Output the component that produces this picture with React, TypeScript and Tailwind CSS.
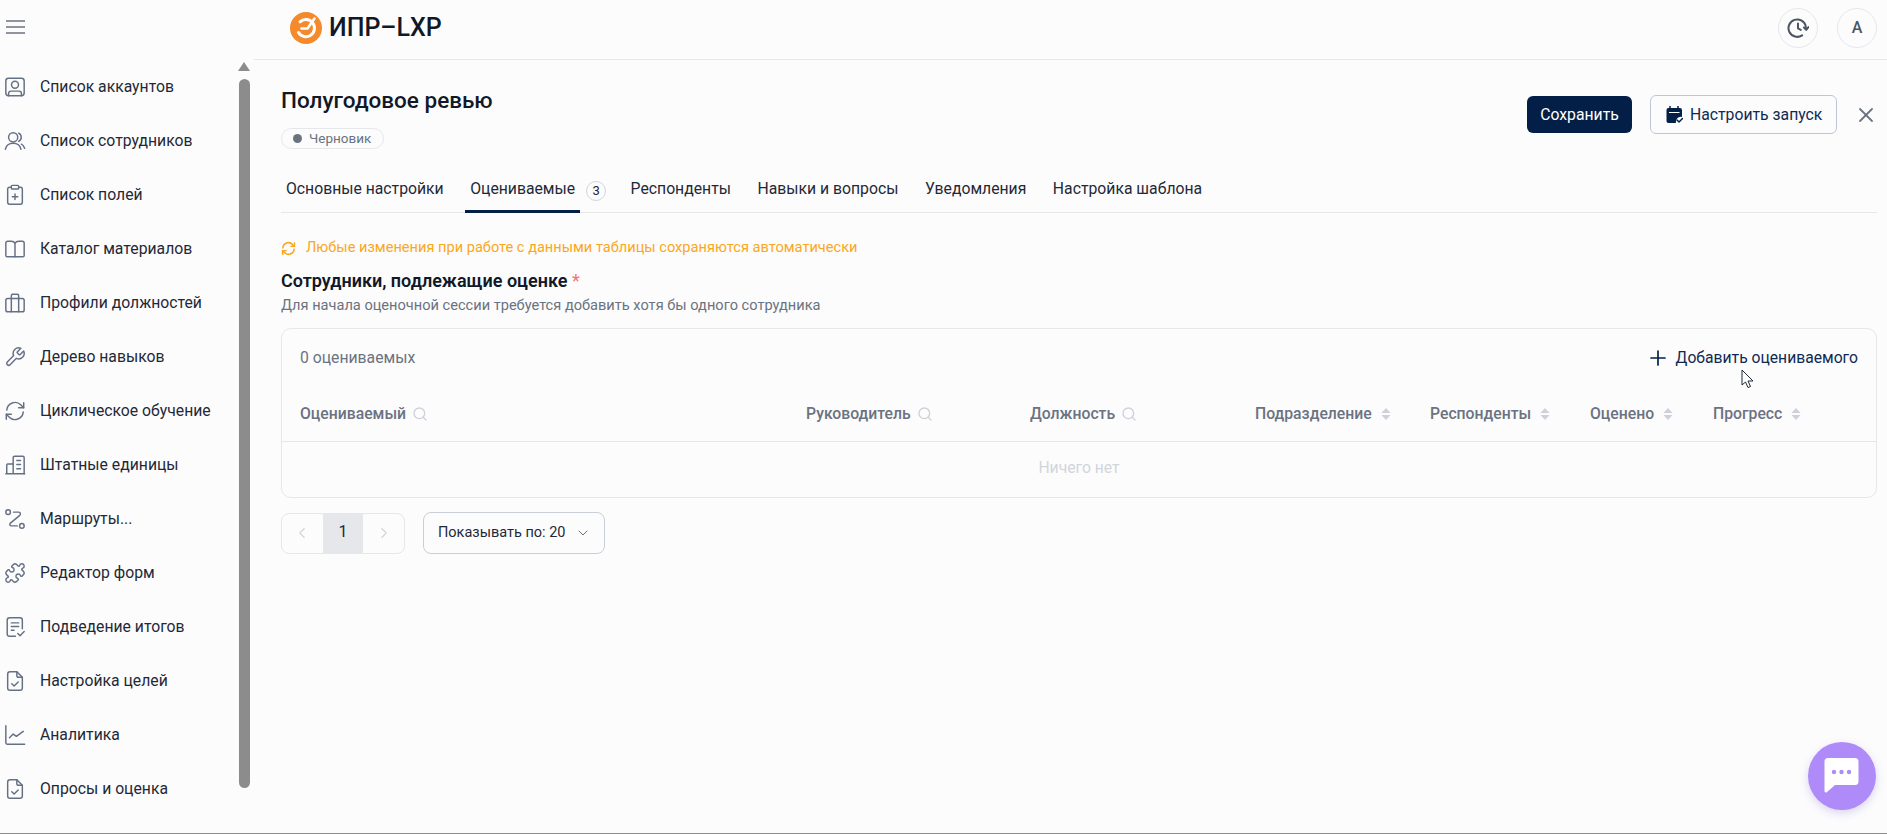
import type { ReactNode } from "react";
import { ChevronDown, ChevronLeft, ChevronRight, Plus, Search, X } from "lucide-react";

function Ico({ children }: { children: ReactNode }) {
  return (
    <svg
      width="22"
      height="22"
      viewBox="0 0 24 24"
      fill="none"
      stroke="#667085"
      strokeWidth="1.600"
      strokeLinecap="round"
      strokeLinejoin="round"
      className="shrink-0"
    >
      {children}
    </svg>
  );
}

const menu: { label: string; icon: ReactNode }[] = [
  {
    label: "Список аккаунтов",
    icon: (
      <>
        <rect x="2" y="2.500" width="20" height="19" rx="3" />
        <circle cx="12" cy="9.500" r="3.800" />
        <path d="M5 21.500v-2.500a2.500 2.500 0 0 1 2.500-2.500h9a2.500 2.500 0 0 1 2.500 2.500v2.500" />
      </>
    ),
  },
  {
    label: "Список сотрудников",
    icon: (
      <>
        <circle cx="10" cy="8" r="5" />
        <path d="M1.500 21c1-4.500 4.500-6.500 8.500-6.500s7.500 2 8.500 6.500" />
        <path d="M16 3.500a5 5 0 0 1 0 9" />
        <path d="M19 15.500c1.700.8 2.800 2.500 3.500 4.500" />
      </>
    ),
  },
  {
    label: "Список полей",
    icon: (
      <>
        <rect x="8" y="1.500" width="8" height="4" rx="1" />
        <path d="M8 3.500H6a2 2 0 0 0-2 2V20a2 2 0 0 0 2 2h12a2 2 0 0 0 2-2V5.500a2 2 0 0 0-2-2h-2" />
        <path d="M12 11v6M9 14h6" />
      </>
    ),
  },
  {
    label: "Каталог материалов",
    icon: (
      <>
        <path d="M12 5.500C11 4 9.500 3.500 8 3.500H4a2 2 0 0 0-2 2V19a1.500 1.500 0 0 0 1.500 1.500H20.500A1.500 1.500 0 0 0 22 19V5.500a2 2 0 0 0-2-2h-4c-1.500 0-3 .5-4 2Z" />
        <path d="M12 5.500v15" />
      </>
    ),
  },
  {
    label: "Профили должностей",
    icon: (
      <>
        <rect x="2" y="7" width="20" height="14.500" rx="2" />
        <path d="M8 7V4a1.500 1.500 0 0 1 1.500-1.500h5A1.500 1.500 0 0 1 16 4v3" />
        <path d="M8 7v14.500M16 7v14.500" />
      </>
    ),
  },
  {
    label: "Дерево навыков",
    icon: (
      <path d="M14.700 6.300a1 1 0 0 0 0 1.400l1.600 1.600a1 1 0 0 0 1.400 0l3.770-3.770a6 6 0 0 1-7.940 7.940l-6.910 6.910a2.120 2.120 0 0 1-3-3l6.910-6.910a6 6 0 0 1 7.940-7.940l-3.760 3.760z" />
    ),
  },
  {
    label: "Циклическое обучение",
    icon: (
      <>
        <path d="M3 11a9 9 0 0 1 15.500-5.500L21.500 8.500" />
        <path d="M21.500 3v5.500H16" />
        <path d="M21 13a9 9 0 0 1-15.500 5.500L2.500 15.500" />
        <path d="M2.500 21v-5.500H8" />
      </>
    ),
  },
  {
    label: "Штатные единицы",
    icon: (
      <>
        <path d="M2 21.500h20.500" />
        <path d="M3 21V12a1 1 0 0 1 1-1h6" />
        <path d="M10 21V4a1.500 1.500 0 0 1 1.500-1.500h9A1.500 1.500 0 0 1 22 4v17.500" />
        <path d="M14 7h4M14 11.500h4M14 16h4" />
      </>
    ),
  },
  {
    label: "Маршруты...",
    icon: (
      <>
        <circle cx="4.500" cy="4.500" r="2.500" />
        <circle cx="19.500" cy="19.500" r="2.500" />
        <path d="M10.500 4.500h5.500c2 0 2.500 2.300 1.200 3.500L7 16.500c-1.300 1.200-.6 3 1 3h6.500" />
      </>
    ),
  },
  {
    label: "Редактор форм",
    icon: (
      <path d="M15.390 4.390a1 1 0 0 0 1.680-.474 2.500 2.500 0 1 1 3.014 3.015 1 1 0 0 0-.474 1.680l1.683 1.682a2.414 2.414 0 0 1 0 3.414L19.610 15.390a1 1 0 0 1-1.680-.474 2.500 2.500 0 1 0-3.014 3.015 1 1 0 0 1 .474 1.680l-1.683 1.682a2.414 2.414 0 0 1-3.414 0L8.610 19.610a1 1 0 0 0-1.680.474 2.500 2.500 0 1 1-3.014-3.015 1 1 0 0 0 .474-1.680l-1.683-1.682a2.414 2.414 0 0 1 0-3.414L4.390 8.610a1 1 0 0 1 1.680.474 2.500 2.500 0 1 0 3.014-3.015 1 1 0 0 1-.474-1.680l1.683-1.682a2.414 2.414 0 0 1 3.414 0z" />
    ),
  },
  {
    label: "Подведение итогов",
    icon: (
      <>
        <path d="M12.500 22H6a2.500 2.500 0 0 1-2.500-2.500v-15A2.500 2.500 0 0 1 6 2h11.500A2.500 2.500 0 0 1 20 4.500V14" />
        <path d="M8 7.500h8M8 11.500h8M8 15.500h3" />
        <path d="m15 19 2.500 2.500 4.500-4.500" />
      </>
    ),
  },
  {
    label: "Настройка целей",
    icon: (
      <>
        <path d="M14 2H6.500A2.500 2.500 0 0 0 4 4.500v15A2.500 2.500 0 0 0 6.500 22h11a2.500 2.500 0 0 0 2.500-2.500V8z" />
        <path d="M14 2v4a2 2 0 0 0 2 2h4" />
        <path d="m8.500 15 2.500 2.500 4.500-4.500" />
      </>
    ),
  },
  {
    label: "Аналитика",
    icon: (
      <>
        <path d="M2 2v18.500a1.500 1.500 0 0 0 1.500 1.500H22.500" />
        <path d="m6 15 4-4 3.500 2.500L21 8" />
      </>
    ),
  },
  {
    label: "Опросы и оценка",
    icon: (
      <>
        <path d="M14 2H6.500A2.500 2.500 0 0 0 4 4.500v15A2.500 2.500 0 0 0 6.500 22h11a2.500 2.500 0 0 0 2.500-2.500V8z" />
        <path d="M14 2v4a2 2 0 0 0 2 2h4" />
        <path d="m8.500 15 2.500 2.500 4.500-4.500" />
      </>
    ),
  },
];

const tabs = ["Респонденты", "Навыки и вопросы", "Уведомления", "Настройка шаблона"];

function Sorter() {
  return (
    <svg width="10" height="14" viewBox="0 0 10 14" className="shrink-0" fill="#ccd1da">
      <path d="M5 1 9.500 6H.5z" />
      <path d="M5 13 .5 8h9z" />
    </svg>
  );
}

function Logo() {
  return (
    <svg width="32" height="32" viewBox="0 0 32 32" className="shrink-0">
      <circle cx="16" cy="16" r="16" fill="#f58a2c" />
      <path d="M8.500 20.500A8.600 8.600 0 1 0 10 9.800" fill="none" stroke="#fff" strokeWidth="3" strokeLinecap="round" />
      <path d="M11.500 16.500h6L24.500 6.500" fill="none" stroke="#fff" strokeWidth="2.600" strokeLinecap="round" strokeLinejoin="round" />
    </svg>
  );
}

export default function App() {
  return (
    <div className="relative flex h-[834px] w-full overflow-hidden bg-[#fcfcfd] font-['Roboto',sans-serif] text-[#111827]">
      {/* sidebar */}
      <aside className="relative h-full w-[254px] shrink-0">
        <div className="flex h-[60px] items-center pb-[6px] pl-[5px]">
          <svg width="21" height="16" viewBox="0 0 21 16" fill="none" stroke="#6b7280" strokeWidth="1.500">
            <path d="M1 2h19M1 8h19M1 14h19" />
          </svg>
        </div>
        <nav className="flex flex-col">
          {menu.map((item) => (
            <div key={item.label} className="flex h-[54px] items-center gap-[14px] pl-[4px] text-[15.750px] leading-6">
              <Ico>{item.icon}</Ico>
              <span className="text-[#1f2937]">{item.label}</span>
            </div>
          ))}
        </nav>
        {/* scrollbar */}
        <div className="absolute left-[238px] top-[62px] h-0 w-0 border-x-[6px] border-b-[9px] border-x-transparent border-b-[#8c8c8c]" />
        <div className="absolute left-[239px] top-[79px] h-[709px] w-[11px] rounded-full bg-[#8c8c8c]" />
      </aside>

      {/* main */}
      <div className="min-w-0 flex-1">
        <header className="flex h-[60px] items-center justify-between border-b border-[#e5e7eb] pr-[10px] pl-[36px]">
          <div className="mb-[3px] flex items-center gap-[7px]">
            <Logo />
            <span className="text-[25px] leading-8 font-medium text-[#111827]">ИПР–LXP</span>
          </div>
          <div className="mb-[3px] flex items-center gap-[19px]">
            <div className="flex h-[40px] w-[40px] items-center justify-center rounded-full border border-[#e5e7eb]">
              <svg width="22" height="22" viewBox="0 0 24 24" fill="none" stroke="#4b5563" strokeWidth="2.200" strokeLinecap="round" strokeLinejoin="round">
                <path d="M20.500 10.500A9.500 9.500 0 1 0 16.500 20" />
                <path d="M12 7v5.500l3 1.500" />
                <path d="m18.500 11.500 2.500 2.500 2.500-3" fill="#4b5563" />
              </svg>
            </div>
            <div className="flex h-[40px] w-[40px] items-center justify-center rounded-full border border-[#e5e7eb] text-[16px] font-medium text-[#4b5563]">
              A
            </div>
          </div>
        </header>

        <div className="pr-[10px] pl-[27px]">
          {/* title row */}
          <div className="flex items-start justify-between pt-[26px]">
            <div>
              <h1 className="text-[22.500px] leading-[29px] font-medium text-[#111827]">Полугодовое ревью</h1>
              <div className="mt-[13px] flex h-[21px] w-[103px] items-center gap-[7px] rounded-full border border-[#e5e7eb] pl-[11px] text-[13.500px] text-[#6b7280]">
                <span className="h-[9px] w-[9px] rounded-full bg-[#6b7280]" />
                Черновик
              </div>
            </div>
            <div className="mt-[9px] flex items-center">
              <button className="h-[37px] w-[105px] rounded-[6px] bg-[#041f47] text-[15.750px] text-white">Сохранить</button>
              <button className="ml-[18px] flex h-[39px] w-[187px] items-center gap-[7px] rounded-[6px] border border-[#bcc8d9] pl-[15px] text-[15.750px] text-[#0f2a52]">
                <svg width="17" height="18" viewBox="0 0 17 18" className="shrink-0">
                  <path d="M4 .5v3M12 .5v3" stroke="#041f47" strokeWidth="1.500" strokeLinecap="round" />
                  <path d="M2.500 2H14a2 2 0 0 1 2 2v7a5 5 0 0 0-6 6H2.500a2 2 0 0 1-2-2V4a2 2 0 0 1 2-2Z" fill="#041f47" />
                  <path d="M3 6.500h10.500" stroke="#fcfcfd" strokeWidth="1" />
                  <path d="m11 14 2 2 3.500-3.500" fill="none" stroke="#041f47" strokeWidth="1.500" strokeLinecap="round" strokeLinejoin="round" />
                </svg>
                Настроить запуск
              </button>
              <X className="mr-[-1px] ml-[17px]" size={24} color="#6b7280" strokeWidth={1.800} />
            </div>
          </div>

          {/* tabs */}
          <div className="mt-[19px] flex h-[45px] items-stretch gap-[16.500px] border-b border-[#e5e7eb] text-[15.750px] leading-6 text-[#1f2937]">
            <div className="flex items-center px-[5px] pb-[2px]">Основные настройки</div>
            <div className="flex">
              <div className="-mb-[1px] flex items-center border-b-[3px] border-[#041f47] px-[5px] text-[#1f2937]">Оцениваемые</div>
              <div className="mr-[3px] ml-[6px] flex items-center pt-[1px]">
                <span className="flex h-[20px] w-[20px] items-center justify-center rounded-full border border-[#d1d5db] text-[13px]">3</span>
              </div>
            </div>
            {tabs.map((tab) => (
              <div key={tab} className="flex items-center px-[5px] pb-[2px]">{tab}</div>
            ))}
          </div>

          {/* notice */}
          <div className="mt-[25px] flex h-[20px] items-center gap-[10px] text-[14.600px] text-[#fba71b]">
            <svg width="15" height="15" viewBox="0 0 24 24" fill="none" stroke="#fba71b" strokeWidth="2.400" strokeLinecap="round" strokeLinejoin="round" className="shrink-0">
              <path d="M3 11a9 9 0 0 1 15.500-5.500L21.500 8.500" />
              <path d="M21.500 3v5.500H16" />
              <path d="M21 13a9 9 0 0 1-15.500 5.500L2.500 15.500" />
              <path d="M2.500 21v-5.500H8" />
            </svg>
            Любые изменения при работе с данными таблицы сохраняются автоматически
          </div>

          <h2 className="mt-[10px] text-[18px] leading-[26px] font-semibold text-[#111827]">
            Сотрудники, подлежащие оценке <span className="font-normal text-[#f87171]">*</span>
          </h2>
          <p className="mt-[1px] text-[14.600px] leading-[20px] text-[#6b7280]">
            Для начала оценочной сессии требуется добавить хотя бы одного сотрудника
          </p>

          {/* table */}
          <div className="mt-[13px] h-[170px] rounded-[10px] border border-[#e5e7eb]">
            <div className="flex h-[56px] items-center justify-between pt-[2px] pr-[18px] pl-[18px]">
              <span className="text-[15.750px] text-[#6b7280]">0 оцениваемых</span>
              <button className="flex items-center gap-[6px] text-[15.700px] text-[#0f2a52]">
                <Plus size={24} strokeWidth={1.700} color="#041f47" />
                Добавить оцениваемого
              </button>
            </div>
            <div className="grid h-[57px] grid-cols-[506px_224px_225px_175px_160px_123px_1fr] items-center border-b border-[#e5e7eb] pt-[1px] pl-[18px] text-[15.750px] font-medium text-[#6b7280]">
              <div className="flex items-center gap-[6px]">Оцениваемый <Search size={16} color="#ccd1da" strokeWidth={2} /></div>
              <div className="flex items-center gap-[6px]">Руководитель <Search size={16} color="#ccd1da" strokeWidth={2} /></div>
              <div className="flex items-center gap-[6px]">Должность <Search size={16} color="#ccd1da" strokeWidth={2} /></div>
              <div className="flex items-center gap-[9px]">Подразделение <Sorter /></div>
              <div className="flex items-center gap-[9px]">Респонденты <Sorter /></div>
              <div className="flex items-center gap-[9px]">Оценено <Sorter /></div>
              <div className="flex items-center gap-[9px]">Прогресс <Sorter /></div>
            </div>
            <div className="flex h-[53px] items-center justify-center pb-[2px] text-[15.700px] text-[#d1d5db]">Ничего нет</div>
          </div>

          {/* pagination */}
          <div className="mt-[14px] flex items-center gap-[18px]">
            <div className="flex h-[41px] w-[124px] rounded-[8px] border border-[#e5e7eb]">
              <div className="flex w-[41px] items-center justify-center"><ChevronLeft size={18} color="#d1d5db" strokeWidth={1.500} /></div>
              <div className="flex w-[41px] items-center justify-center bg-[#e5e7eb] pb-[2px] text-[16px] text-[#1f2937]">1</div>
              <div className="flex w-[41px] items-center justify-center"><ChevronRight size={18} color="#d1d5db" strokeWidth={1.500} /></div>
            </div>
            <div className="flex h-[42px] w-[182px] items-center gap-[9px] rounded-[8px] border border-[#c9ced8] pl-[14px] text-[14.500px] text-[#1f2937]">
              Показывать по: 20
              <ChevronDown size={16} color="#6b7280" strokeWidth={1.500} />
            </div>
          </div>
        </div>
      </div>

      {/* cursor */}
      <svg className="absolute left-[1741px] top-[369px]" width="14" height="20" viewBox="0 0 14 20" fill="#fff" stroke="#1f2937" strokeWidth="1">
        <path d="M1 1v15l3.500-3 2.500 5.500 2.500-1-2.500-5.500h5z" />
      </svg>

      {/* chat button */}
      <div className="absolute left-[1808px] top-[742px] flex h-[68px] w-[68px] items-center justify-center rounded-full bg-[#ae8bf8] shadow-[0_3px_8px_rgba(120,90,200,0.25)]">
        <svg width="36" height="36" viewBox="0 0 36 36">
          <path d="M4 0h27a3.500 3.500 0 0 1 3.500 3.500v20a3.500 3.500 0 0 1-3.500 3.500H11L2.500 34.500A1.500 1.500 0 0 1 .5 33V3.500A3.500 3.500 0 0 1 4 0Z" fill="#fff" />
          <circle cx="10" cy="14" r="2.200" fill="#ae8bf8" />
          <circle cx="17.500" cy="14" r="2.200" fill="#ae8bf8" />
          <circle cx="25" cy="14" r="2.200" fill="#ae8bf8" />
        </svg>
      </div>

      {/* bottom edge */}
      <div className="absolute bottom-0 left-0 h-[1px] w-full bg-[#8c8c8c]" />
    </div>
  );
}
